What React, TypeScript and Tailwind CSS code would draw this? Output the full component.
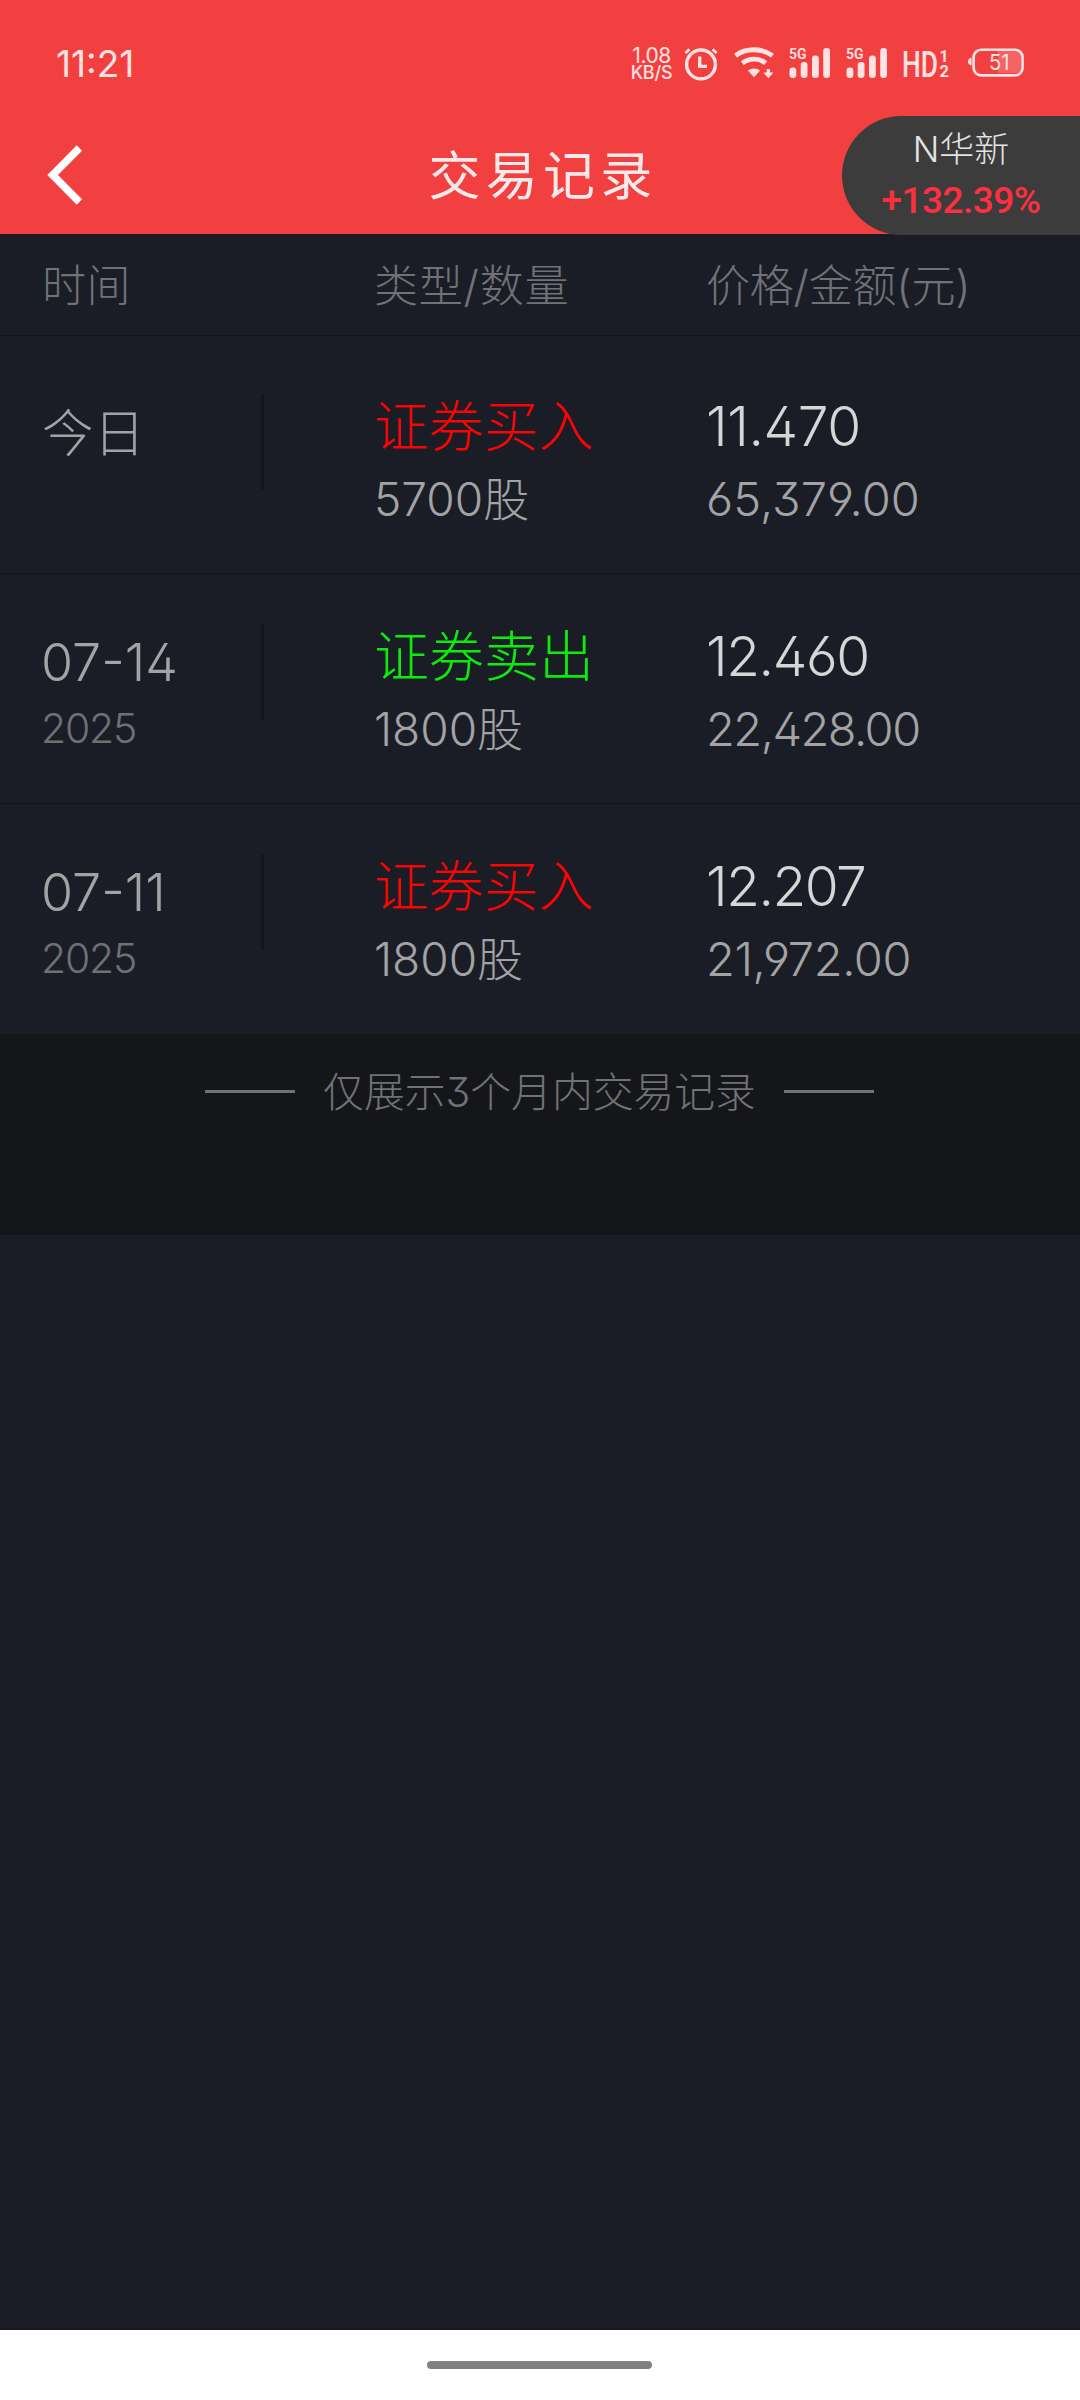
import clsx from 'clsx';

interface TradeRecord {
  id: number;
  date: string;
  year?: string;
  side: 'buy' | 'sell';
  count: number;
  price: string;
  amount: string;
  priceStyle: string;
  amountStyle: string;
}

const records: TradeRecord[] = [
  {
    id: 1,
    date: '今日',
    side: 'buy',
    count: 5700,
    price: '11.470',
    amount: '65,379.00',
    priceStyle: 'tracking-[-0.4px]',
    amountStyle: 'tracking-[0.1px]',
  },
  {
    id: 2,
    date: '07-14',
    year: '2025',
    side: 'sell',
    count: 1800,
    price: '12.460',
    amount: '22,428.00',
    priceStyle: 'tracking-[-1.4px]',
    amountStyle: 'tracking-[-1.5px]',
  },
  {
    id: 3,
    date: '07-11',
    year: '2025',
    side: 'buy',
    count: 1800,
    price: '12.207',
    amount: '21,972.00',
    priceStyle: 'tracking-[-1.5px]',
    amountStyle: 'tracking-[-0.4px]',
  },
];

const sideLabel = { buy: '证券买入', sell: '证券卖出' };

const AlarmIcon = () => (
  <svg width="34" height="34" viewBox="0 0 34 34" fill="none" stroke="currentColor" strokeWidth="3.4">
    <circle cx="17" cy="17.4" r="14.4" />
    <path d="M15.7 9.6v9.8H23" strokeWidth="3.4" />
    <path d="M1.4 6 5.4 2.2M32.6 6 28.6 2.2" strokeWidth="2.8" />
  </svg>
);

const WifiIcon = () => (
  <svg width="40" height="32" viewBox="0 0 40 32" fill="none" stroke="currentColor" strokeWidth="4.8">
    <path d="M1.5 8.6C12 .8 28 .8 38.5 8.6" />
    <path d="M8.3 16.2C15 10.8 25 10.8 31.7 16.2" />
    <path d="M20 30.3 13.8 23.6Q20 19.6 26.2 23.6Z" fill="currentColor" stroke="none" />
    <path d="M34.4 22v4" strokeWidth="3.4" />
    <path d="M29.4 25.6h10L34.4 31.3Z" fill="currentColor" stroke="none" />
  </svg>
);

const SignalIcon = () => (
  <svg className="overflow-visible" width="42" height="32" viewBox="0 0 42 32" fill="currentColor">
    <text x="0" y="12" fontSize="15" fontWeight="600" fontFamily="Roboto" textLength="17.5" lengthAdjust="spacingAndGlyphs">5G</text>
    <rect x=".5" y="20.5" width="6.8" height="10.5" rx="3.2" />
    <rect x="11.7" y="15" width="6.8" height="16" rx="3.2" />
    <rect x="23" y="8.5" width="6.8" height="22.5" rx="3.2" />
    <rect x="34.2" y="1" width="6.8" height="30" rx="3.2" />
  </svg>
);

const BatteryIcon = () => (
  <svg width="57" height="30" viewBox="0 0 57 30" fill="none">
    <path d="M3.5 10.5v8Q0 17.5 0 14.5T3.5 10.5Z" fill="currentColor" />
    <path d="M30 4h18q5 0 5 5v12q0 5-5 5H30Z" fill="#f56464" />
    <rect x="5.6" y="2.8" width="49" height="25.6" rx="7.5" stroke="currentColor" strokeWidth="2.6" />
    <text x="21" y="23" fontSize="21" fill="currentColor" textLength="20.5" lengthAdjust="spacingAndGlyphs">51</text>
  </svg>
);

const StatusBar = () => (
  <div className="flex h-[116px] items-start justify-between pr-[55px] pl-[56px] text-[#ffe3e3]">
    <span className="mt-[41px] text-[37px] leading-[45px]">11:21</span>
    <div className="mt-[47px] flex h-8 items-start">
      <div className="mr-[11px] flex w-[43px] flex-col items-center whitespace-nowrap">
        <span className="text-[21px] leading-[18px] tracking-[-0.5px]">1.08</span>
        <span className="text-[18px] leading-[16px] font-medium tracking-[-0.2px]">KB/S</span>
      </div>
      <AlarmIcon />
      <div className="ml-4"><WifiIcon /></div>
      <div className="ml-[15px]"><SignalIcon /></div>
      <div className="ml-[15px]"><SignalIcon /></div>
      <svg className="ml-[14px] overflow-visible" width="48" height="32" viewBox="0 0 48 32" fill="currentColor">
        <text x="0" y="30" fontSize="36" fontWeight="500" fontFamily="Roboto" textLength="36" lengthAdjust="spacingAndGlyphs">HD</text>
        <text x="37.5" y="14.5" fontSize="17" fontWeight="700" fontFamily="Roboto" textLength="9" lengthAdjust="spacingAndGlyphs">1</text>
        <text x="37.5" y="30" fontSize="17" fontWeight="700" fontFamily="Roboto" textLength="9.5" lengthAdjust="spacingAndGlyphs">2</text>
      </svg>
      <div className="ml-[18px]"><BatteryIcon /></div>
    </div>
  </div>
);

const TitleBar = () => (
  <div className="relative flex h-[118px] items-center justify-center">
    <svg
      className="absolute top-[28px] left-[46px] text-white"
      width="38"
      height="62"
      viewBox="0 0 38 62"
      fill="none"
      stroke="currentColor"
      strokeWidth="7.5"
    >
      <path d="M33.4 4 6.6 31 33.4 58" />
    </svg>
    <h1 className="pt-[3px] pl-[6px] text-[52px] leading-[60px] font-normal tracking-[5.3px] text-[#f6e9ea]">交易记录</h1>
    {/* floating quote, one pixel over the bar's lower edge */}
    <div className="absolute top-0 right-0 flex h-[119px] w-[238px] flex-col items-center rounded-l-full bg-[#3c3c3c]">
      <span className="mt-[11px] text-[35px] leading-[44px] font-light text-[#e4e4e4]">N华新</span>
      <span className="mt-[8px] font-[Roboto,sans-serif] text-[37px] leading-[44px] font-medium tracking-[-0.5px] text-[#ff2f40]">
        +132.39%
      </span>
    </div>
  </div>
);

const RecordRow = ({ record, first }: { record: TradeRecord; first: boolean }) => (
  <li className={clsx('flex border-b border-[#14161c] last:border-b-0', first ? 'h-[238px] pt-2' : 'h-[230px]')}>
    <div className="flex w-[261px] flex-col pl-[41px] text-[#a3a3a5]">
      <span className={clsx('mt-[57px] leading-[64px] font-light', record.year ? 'text-[52px]' : 'pl-[1px] text-[51.5px]')}>
        {record.date}
      </span>
      {record.year && (
        <span className="mt-[8px] text-[41px] leading-[50px] font-light tracking-[-1.2px] text-[#6f7074]">{record.year}</span>
      )}
    </div>
    <div className="mt-[50px] h-24 w-[3px] bg-[#15161a]" />
    <div className="ml-[110px] flex w-[332px] flex-col">
      <span
        className={clsx(
          'mt-[50px] text-[55px] leading-[64px] font-light',
          record.side === 'buy' ? 'text-[#fa0404]' : 'text-[#0cec0c]',
        )}
      >
        {sideLabel[record.side]}
      </span>
      <span className="mt-[11px] text-[46px] leading-[60px] font-light text-[#a3a3a5]">{record.count}股</span>
    </div>
    <div className="flex flex-col">
      <span className={clsx('mt-[50px] text-[55px] leading-[64px] font-light text-[#d6d6d6]', record.priceStyle)}>
        {record.price}
      </span>
      <span className={clsx('mt-[11px] text-[47px] leading-[60px] font-light text-[#a3a3a5]', record.amountStyle)}>
        {record.amount}
      </span>
    </div>
  </li>
);

const App = () => {
  return (
    <div className="flex h-[2400px] w-[1080px] flex-col overflow-hidden bg-[#1b1d26] font-[Inter,'Noto_Sans_CJK_SC',sans-serif] [font-feature-settings:'ss01']">
      <header className="bg-[#f24040]">
        <StatusBar />
        <TitleBar />
      </header>
      <div className="flex h-[102px] items-center border-b border-[#14161c] pt-[2px] pl-[42px] text-[44px] font-light text-[#717276]">
        <span className="w-[332px] tracking-[0.5px]">时间</span>
        <span className="w-[332px] tracking-[0.8px]">类型/数量</span>
        <span className="tracking-[-0.2px]">价格/金额(元)</span>
      </div>
      <ul>
        {records.map((record, i) => (
          <RecordRow key={record.id} record={record} first={i === 0} />
        ))}
      </ul>
      <div className="flex h-[201px] items-start justify-center gap-[28px] bg-[#15161a] pt-[28px] pr-[1px] text-[#717276]">
        <span className="mt-[28px] h-[3px] w-[90px] bg-[#717276]" />
        <span className="text-[40.8px] leading-[60px] font-light">仅展示3个月内交易记录</span>
        <span className="mt-[28px] h-[3px] w-[90px] bg-[#717276]" />
      </div>
      <div className="mt-auto flex h-[72px] justify-center border-t-2 border-[#1f1420] bg-white pt-[31px] pr-[1px]">
        <div className="h-2 w-[225px] rounded-full bg-[#808080]" />
      </div>
    </div>
  );
};

export default App;
